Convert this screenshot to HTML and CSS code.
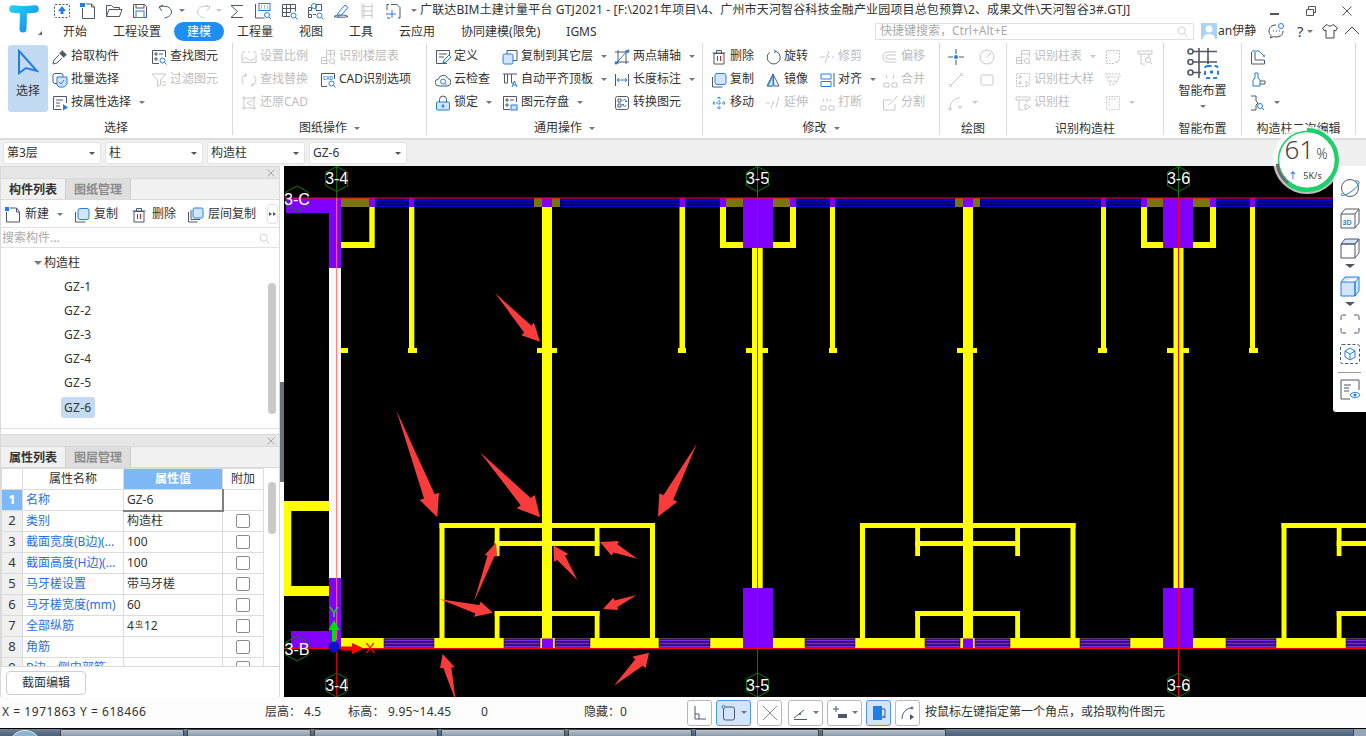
FILE: index.html
```html
<!DOCTYPE html>
<html lang="zh-CN">
<head>
<meta charset="utf-8">
<title>广联达BIM土建计量平台 GTJ2021</title>
<link rel="stylesheet" href="styles.css">
</head>
<body>
<div class="app">
  <header class="head">
    <div class="logo-col">
      <svg class="logo" viewBox="0 0 32 32"><defs><linearGradient id="lg" gradientUnits="userSpaceOnUse" x1="0" y1="0" x2="30" y2="30"><stop offset="0" stop-color="#25dcf6"/><stop offset="1" stop-color="#1483ee"/></linearGradient></defs><path d="M5 7C12 8 20 8 27 7" stroke="url(#lg)" stroke-width="7.5" stroke-linecap="round" fill="none"/><path d="M15 8C16 15 15 20 15 27" stroke="url(#lg)" stroke-width="7" stroke-linecap="round" fill="none"/></svg>
      <i class="logo-mark"></i>
    </div>
    <div class="head-right">
      <div class="title-row">
        <div class="qa">
          <svg class="qi" viewBox="0 0 18 18"><rect x="1.500" y="2.500" width="15" height="13" rx="1" stroke-dasharray="2 1.500"/><path class="bfill" d="M9 4l4 5h-2.500v3h-3V9H5z"/></svg>
          <svg class="qi" viewBox="0 0 18 18"><path d="M3.500 6v10.500h12V5l-3-3H7"/><path d="M12.500 2v3h3"/><rect class="bfill" x="1" y="1" width="5" height="4"/></svg>
          <svg class="qi" viewBox="0 0 18 18"><path d="M1.500 14.500V3.500h5l2 2h6v2"/><path d="M1.500 14.500l2.500-7h13l-2.500 7z"/></svg>
          <svg class="qi" viewBox="0 0 18 18"><path d="M2.500 2.500h11l2 2v11h-13z"/><rect x="5" y="2.500" width="8" height="3.500"/><rect class="bline" x="5" y="9" width="8" height="6.500"/></svg>
          <span class="qi-wrap"><svg class="qi" viewBox="0 0 18 18"><path d="M5 9l-3-4 4-2"/><path d="M2.500 5c6-2 12 0 12 5 0 3-3 5-7 6"/></svg><i class="caret"></i></span>
          <span class="qi-wrap qi-tight"><svg class="qi off" viewBox="0 0 18 18"><path d="M13 9l3-4-4-2"/><path d="M15.500 5c-6-2-12 0-12 5 0 3 3 5 7 6"/></svg><i class="caret pale"></i></span>
          <svg class="qi" viewBox="0 0 18 18"><path d="M15 3.500H3l6.500 6-6.500 6h12"/></svg>
          <svg class="qi" viewBox="0 0 18 18"><path d="M1.500 2v14h9"/><rect class="bline" x="5" y="1.500" width="11" height="7"/><path class="bline" d="M7 4h1M10 4h1M13 4h1M7 6h1M10 6h1M13 6h1"/><circle class="bline" cx="13" cy="13" r="2.500"/><path class="bline" d="M15 15l2 2"/></svg>
          <svg class="qi" viewBox="0 0 18 18"><path d="M10 14.500H2.500v-12h13v7M2.500 6.500h13M2.500 10.500h8M6.500 2.500v12M10.500 2.500v8"/><circle class="bline" cx="13.500" cy="13.500" r="2.500"/><path class="bline" d="M15.500 15.500l2 2"/></svg>
          <svg class="qi" viewBox="0 0 18 18"><path d="M2.500 8.500v-3h3v3zM2.500 15.500v-3h3v3zM10 8.500v-6h5.500v6zM7 12.500h3M2.500 8.500v4"/><circle class="bline" cx="8" cy="4" r="2.500"/><circle class="bline" cx="13.500" cy="13.500" r="2.500"/><path class="bline" d="M15.500 15.500l2 2"/></svg>
          <svg class="qi" viewBox="0 0 18 18"><path d="M2 14.500c2-2 12-2 14 0-1 1-13 1-14 0z"/><path class="bline" d="M6 11l7-8 3 2.500-7 8-3.500 1z"/></svg>
          <svg class="qi off" viewBox="0 0 18 18"><path d="M4 1.500v15M14 1.500v15M4 4.500h10M4 9h10M4 13.500h10M6 1.500v15"/></svg>
          <svg class="qi" viewBox="0 0 18 18"><path d="M7 2.500h6l3 3v10.500h-2M3 8V2.500h2M3 16h3M3 11v2"/><path class="bline" d="M8 8v8M4 12h8"/></svg>
          <i class="caret title-caret"></i>
        </div>
        <div class="title">广联达BIM土建计量平台 GTJ2021 - [F:\2021年项目\4、广州市天河智谷科技金融产业园项目总包预算\2、成果文件\天河智谷3#.GTJ]</div>
        <div class="winbtns">
          <svg class="wi" viewBox="0 0 12 12"><path d="M1 9h9" stroke-width="2"/></svg>
          <svg class="wi" viewBox="0 0 12 12"><path d="M1.500 4.500h7v6h-7zM3.500 4.500v-3h7v6h-2"/></svg>
          <svg class="wi" viewBox="0 0 12 12"><path d="M1.500 1.500l9 9M10.500 1.500l-9 9"/></svg>
        </div>
      </div>
      <div class="tab-row">
        <nav class="tabs">
          <span class="tab">开始</span><span class="tab">工程设置</span><span class="tab active">建模</span><span class="tab">工程量</span><span class="tab">视图</span><span class="tab">工具</span><span class="tab">云应用</span><span class="tab">协同建模(限免)</span><span class="tab">IGMS</span>
        </nav>
        <div class="head-tools">
          <div class="quick"><span>快捷键搜索，Ctrl+Alt+E</span><svg class="ic off mag" viewBox="0 0 16 16"><circle cx="7" cy="7" r="4.500"/><path d="M10.500 10.500l3.500 3.500"/></svg></div>
          <svg class="avatar" viewBox="0 0 16 16"><rect width="16" height="16" fill="#a9d4f7"/><circle cx="8" cy="6" r="3.500" fill="#fff"/><path d="M2 16c0-4 3-5 6-5s6 1 6 5z" fill="#fff"/></svg>
          <span class="uname">an伊静</span>
          <svg class="hi hi-chat" viewBox="0 0 18 18"><path d="M9 3C4.500 3 2 5.500 2 9c0 2 1 3.500 2 4.500L3.500 16l3-1.500c1 .3 1.800.5 2.500.5 4.500 0 7-2.500 7-6"/><path d="M6 9h1M9 9h1M12 9h1"/><circle class="bline" cx="14" cy="4" r="2.500"/></svg>
          <span class="help">?<i class="caret"></i></span>
          <svg class="hi" viewBox="0 0 18 18"><path d="M6 2.500L1.500 6l2 3 1.500-1v8h8V8l1.500 1 2-3L12 2.500c-1 2-5 2-6 0z"/></svg>
          <svg class="hi hi-up" viewBox="0 0 18 18"><path d="M2 12l7-7 7 7"/></svg>
        </div>
      </div>
    </div>
  </header>

  <section class="ribbon">
    <div class="group g1">
      <div class="body">
        <button class="big sel"><svg class="bigarrow" viewBox="0 0 22 26"><path d="M2 2l18 20-11-3-7 5z"/></svg><span>选择</span></button>
        <div class="col w99">
          <div class="tool"><svg class="ic" viewBox="0 0 16 16"><path class="dk" d="M10 1l5 5-2 1-1 2-5-5 2-1z"/><path d="M7 6l-5 5-1 4 4-1 5-5"/></svg>拾取构件</div>
          <div class="tool"><svg class="ic" viewBox="0 0 16 16"><rect x="1" y="1.500" width="10" height="10" rx="2"/><path class="bfill2" d="M5 5h10v7l-3 3H7l-2-2z"/><path class="bline" d="M7 10l2 2 3-4"/></svg>批量选择</div>
          <div class="tool"><svg class="ic" viewBox="0 0 16 16"><path d="M14.500 8V1.500h-13v13h8M4 5h7M4 8h4M4 11h4"/><path class="bsolid" d="M11 9l5 3.500-5 3z"/></svg>按属性选择<i class="caret"></i></div>
        </div>
        <div class="col">
          <div class="tool"><svg class="ic" viewBox="0 0 16 16"><path d="M8 14.500H1.500v-13h13V8M4 4h2v2H4zM8 5h4M4 9h2v2H4z"/><circle class="bline" cx="11.500" cy="11.500" r="2.500"/><path class="bline" d="M13.500 13.500l2 2"/></svg>查找图元</div>
          <div class="tool off"><svg class="ic off" viewBox="0 0 16 16"><path d="M1 2h14L9.500 8v5l-3 1.500V8z"/><path d="M11 10h4M11 13h4"/></svg>过滤图元</div>
        </div>
      </div>
      <div class="glabel">选择</div>
    </div>

    <div class="group g2">
      <div class="body">
        <div class="col w79">
          <div class="tool off"><svg class="ic off" viewBox="0 0 16 16"><path d="M1 4.500v9h14v-9M1 3h3M7 3h2M12 3h3M2 11c2-3 3-3 5-1s4 2 7-1"/></svg>设置比例</div>
          <div class="tool off"><svg class="ic off" viewBox="0 0 16 16"><path d="M5 2.500a6 6 0 0 0-2 10M11 13.500a6 6 0 0 0 2-10M5 1v3H2M11 15v-3h3"/></svg>查找替换</div>
          <div class="tool off"><svg class="ic off" viewBox="0 0 16 16"><path d="M3 1v14M13 1v14M1 3h14M1 13h14M11 5L6 8l5 3"/></svg>还原CAD</div>
        </div>
        <div class="col">
          <div class="tool off"><svg class="ic off" viewBox="0 0 16 16"><path d="M8 14.500H1.500v-6h5v-7h8V8M1.500 11.500h7M6.500 8.500v6M10.500 1.500V8M6.500 5h8"/><circle cx="12" cy="12" r="2.500"/><path d="M14 14l1.500 1.500"/></svg>识别楼层表</div>
          <div class="tool"><svg class="ic" viewBox="0 0 16 16"><path d="M7 14.500H1.500v-13h13V7"/><text class="cad" x="3" y="7.500">CAD</text><circle class="bline" cx="11.500" cy="11.500" r="2.500"/><path class="bline" d="M13.500 13.500l2 2"/></svg>CAD识别选项</div>
        </div>
      </div>
      <div class="glabel">图纸操作<i class="caret cl"></i></div>
    </div>

    <div class="group g3">
      <div class="body">
        <div class="col w67">
          <div class="tool"><svg class="ic" viewBox="0 0 16 16"><path d="M12 14.500H1.500v-13h13v5M4 5h8M4 8h5"/><path class="bline" d="M8 14l1-3 5-5 2 2-5 5z"/></svg>定义</div>
          <div class="tool"><svg class="ic" viewBox="0 0 16 16"><path d="M4 14a3.500 3.500 0 0 1-.5-7A5 5 0 0 1 13 6.500a3.800 3.800 0 0 1-1 7.500z"/><circle class="bline" cx="8" cy="9.500" r="2.500"/><path class="bline" d="M10 11.500l1.500 1.500"/></svg>云检查</div>
          <div class="tool"><svg class="ic" viewBox="0 0 16 16"><path d="M4.500 7V4.500a3.500 3.500 0 0 1 7 0V7"/><rect class="bfill2" x="1.500" y="7" width="13" height="8" rx="1"/><path class="bsolid" d="M8 9l2 2.500H6zM7.500 11h1v2h-1z"/></svg>锁定<i class="caret"></i></div>
        </div>
        <div class="col w112">
          <div class="tool"><svg class="ic" viewBox="0 0 16 16"><path d="M5 5V1.500h10v10h-4"/><rect class="bfill2" x="1" y="5" width="10" height="10" rx="1.500"/></svg>复制到其它层<i class="caret"></i></div>
          <div class="tool"><svg class="ic" viewBox="0 0 16 16"><path d="M1 2h14M2.500 2v9h3V2M9.500 2v9h2"/><path class="bline" d="M10 15l2.500-6 2.500 6M11 13h3"/></svg>自动平齐顶板<i class="caret"></i></div>
          <div class="tool"><svg class="ic" viewBox="0 0 16 16"><path d="M8 14.500H1.500v-13h13V7M4 4h2v2H4zM8 5h4M4 9h2v2H4z"/><rect class="bfill2" x="9" y="10" width="6" height="5"/></svg>图元存盘<i class="caret"></i></div>
        </div>
        <div class="col">
          <div class="tool"><svg class="ic" viewBox="0 0 16 16"><path d="M4 1v14M12 1v14M1 3h14M1 13h14"/><path class="bline" d="M1.500 15L14 1"/><circle class="bsolid" cx="2" cy="14" r="1.500"/><circle class="bsolid" cx="14" cy="2" r="1.500"/></svg>两点辅轴<i class="caret"></i></div>
          <div class="tool"><svg class="ic" viewBox="0 0 16 16"><path d="M1.500 2v12M14.500 2v12"/><path class="bline" d="M3 8h10M5 6L3 8l2 2M11 6l2 2-2 2"/></svg>长度标注<i class="caret"></i></div>
          <div class="tool"><svg class="ic" viewBox="0 0 16 16"><rect x="1.500" y="1.500" width="13" height="13" rx="2"/><path d="M4 4h3v3H4zM4 9h3v3H4z"/><path class="bline" d="M9 6c0-2 3-2 3 0v1M11 6l1 1 1-1M12 10c0 2-3 2-3 0V9M10 10L9 9 8 10"/></svg>转换图元</div>
        </div>
      </div>
      <div class="glabel">通用操作<i class="caret cl"></i></div>
    </div>

    <div class="group g4">
      <div class="body">
        <div class="col w54">
          <div class="tool"><svg class="ic" viewBox="0 0 16 16"><path d="M3 4.500h10V15H3zM1.500 4h13M5.500 4V1.500h5V4"/><path class="rline" d="M6.500 7v5M9.500 7v5"/></svg>删除</div>
          <div class="tool"><svg class="ic" viewBox="0 0 16 16"><path d="M1.500 5v10h10"/><rect class="bfill2" x="4" y="1.500" width="11" height="11" rx="2"/></svg>复制</div>
          <div class="tool"><svg class="ic" viewBox="0 0 16 16"><path class="bline" d="M8 2v12M2 8h12M6.500 3.500L8 1.500l1.500 2M6.500 12.500L8 14.500l1.500-2M3.500 6.500L1.500 8l2 1.500M12.500 6.500l2 1.500-2 1.500" stroke-dasharray="2 1"/></svg>移动</div>
        </div>
        <div class="col w54">
          <div class="tool"><svg class="ic" viewBox="0 0 16 16"><path d="M9.500 2a6.500 6.500 0 1 1-5 1.500"/><path class="bline" d="M9 .5l2 2-2 1.500"/></svg>旋转</div>
          <div class="tool"><svg class="ic" viewBox="0 0 16 16"><path d="M8 2L2 14h5zM8 2l6 12H9z"/><path class="bfill2" d="M8 3L3 14h5z"/></svg>镜像</div>
          <div class="tool off"><svg class="ic off" viewBox="0 0 16 16"><path d="M1 8h4M7 8h2M11 12l3-10M6 13l3-7"/></svg>延伸</div>
        </div>
        <div class="col w63">
          <div class="tool off"><svg class="ic off" viewBox="0 0 16 16"><path d="M1 8h5M9 8h2M13 8h2M10 2L6 14"/></svg>修剪</div>
          <div class="tool"><svg class="ic" viewBox="0 0 16 16"><path class="bline" d="M2 2h10v5H2zM2 9.500h10v5H2z"/><path d="M15 1v14"/></svg>对齐<i class="caret"></i></div>
          <div class="tool off"><svg class="ic off" viewBox="0 0 16 16"><path d="M2 11h5v4H2zM10 11h5v4h-5zM4 4l1 3M12 4l-1 3M8 3v4"/></svg>打断</div>
        </div>
        <div class="col">
          <div class="tool off"><svg class="ic off" viewBox="0 0 16 16"><path d="M14 3H6a5 5 0 0 0 0 10h8M14 6H6a2 2 0 0 0 0 4h8"/></svg>偏移</div>
          <div class="tool off"><svg class="ic off" viewBox="0 0 16 16"><path d="M2 11h5v4H2zM10 11h5v4h-5zM4 3l1 4M12 3l-1 4"/></svg>合并</div>
          <div class="tool off"><svg class="ic off" viewBox="0 0 16 16"><path d="M13 9v6H1.500V5H9M6 10l8-7M15 1l-1 2"/></svg>分割</div>
        </div>
      </div>
      <div class="glabel">修改<i class="caret cl"></i></div>
    </div>

    <div class="group g5">
      <div class="body">
        <div class="col w31">
          <div class="tool"><svg class="ic" viewBox="0 0 16 16"><path d="M8 0v5M8 11v5M0 8h5M11 8h5"/><circle class="bsolid" cx="8" cy="8" r="2"/></svg></div>
          <div class="tool off"><svg class="ic off" viewBox="0 0 16 16"><path d="M3 13L13 3"/><circle cx="2.500" cy="13.500" r="1.200"/><circle cx="13.500" cy="2.500" r="1.200"/></svg></div>
          <div class="tool off"><svg class="ic off" viewBox="0 0 16 16"><path d="M2 14C2 8 6 3 12 3"/><circle cx="2" cy="14" r="1.200"/><circle cx="12" cy="12" r="1.200"/></svg><i class="caret pale"></i></div>
        </div>
        <div class="col">
          <div class="tool off"><svg class="ic off" viewBox="0 0 16 16"><circle cx="8" cy="8" r="7"/><path d="M8 8l4-4"/></svg></div>
          <div class="tool off"><svg class="ic off" viewBox="0 0 16 16"><rect x="2" y="3" width="12" height="10" rx="1.500"/></svg></div>
        </div>
      </div>
      <div class="glabel lower">绘图</div>
    </div>

    <div class="group g6">
      <div class="body">
        <div class="col w90">
          <div class="tool off"><svg class="ic off" viewBox="0 0 16 16"><path d="M8 14.500H1.500v-6h5v-7h8V8M1.500 11.500h7M6.500 8.500v6M6.500 5h8"/><circle cx="12" cy="12" r="2.500"/><path d="M14 14l1.500 1.500"/></svg>识别柱表<i class="caret pale"></i></div>
          <div class="tool off"><svg class="ic off" viewBox="0 0 16 16"><path d="M9 14.500H1.500v-13h13V9" stroke-dasharray="2 1"/><path d="M11 9l4 3-4 3zM4 4h2v2H4zM4 10h2v2H4z"/></svg>识别柱大样</div>
          <div class="tool off"><svg class="ic off" viewBox="0 0 16 16"><path d="M1 2h14v3H1zM4 5v10h4M12 5v3"/><path d="M10 9l5 3-5 3z"/></svg>识别柱</div>
        </div>
        <div class="col w32">
          <div class="tool off"><svg class="ic off" viewBox="0 0 16 16"><path d="M9 14.500H1.500v-13h13V9" stroke-dasharray="2 1"/><path d="M4 4h1M11 4h1M4 11h1M10 12l2 2 3-4"/></svg></div>
          <div class="tool off"><svg class="ic off" viewBox="0 0 16 16"><path d="M1 2h14v3H1zM3 5v4h10V5M5 9v5M11 9v3M7 11l2 2 2-2" stroke-dasharray="2 1"/></svg></div>
          <div class="tool off"><svg class="ic off" viewBox="0 0 16 16"><path d="M1.500 1.500h13v13h-13zM4 4h8M4 4v8" stroke-dasharray="1.500 1"/></svg><i class="caret pale"></i></div>
        </div>
        <div class="col">
          <div class="tool off"><svg class="ic off" viewBox="0 0 16 16"><path d="M1 2h14v3H1zM4 5v10h4M12 5v3"/><circle cx="11" cy="11" r="2.500"/><path d="M13 13l2 2"/></svg></div>
        </div>
      </div>
      <div class="glabel lower">识别构造柱</div>
    </div>

    <div class="group g7">
      <div class="body center">
        <button class="big smart">
          <svg class="smarticon" viewBox="0 0 32 32"><g class="smart-lines"><path d="M6 4.500h24M6 15h24M6 25.500h8M12 1v30M21 1v16"/><circle cx="3.500" cy="4.500" r="2.500"/><circle cx="3.500" cy="15" r="2.500"/><circle cx="3.500" cy="25.500" r="2.500"/></g><rect class="smart-blue" x="18" y="19" width="13" height="12" rx="2.500" stroke-dasharray="4 3"/><circle class="bsolid" cx="24.500" cy="25" r="1.800"/></svg>
          <span>智能布置</span><i class="caret"></i>
        </button>
      </div>
      <div class="glabel lower">智能布置</div>
    </div>

    <div class="group g8">
      <div class="body">
        <div class="col">
          <div class="tool"><svg class="ic" viewBox="0 0 16 16"><path d="M1.500 3v12h13v-4M5 3v8h9"/><path class="bline" d="M2 2h7l5 5"/><circle class="bsolid" cx="14" cy="7" r="1"/></svg></div>
          <div class="tool"><svg class="ic" viewBox="0 0 16 16"><path class="bline" d="M5 1h3v5l2 2v6H3V8l2-2z"/><path d="M10 9h5v3h-5"/></svg></div>
          <div class="tool"><svg class="ic" viewBox="0 0 16 16"><path d="M1 1h5v5l2 2-2 2v5H1"/><circle class="bline" cx="10" cy="11" r="2.500"/><path class="bline" d="M12 13l2 2"/></svg><i class="caret"></i></div>
        </div>
      </div>
      <div class="glabel lower">构造柱二次编辑</div>
    </div>
  </section>

  <div class="combos">
    <div class="combo">第3层<i class="caret"></i></div>
    <div class="combo">柱<i class="caret"></i></div>
    <div class="combo">构造柱<i class="caret"></i></div>
    <div class="combo">GZ-6<i class="caret"></i></div>
  </div>

  <main class="main">
    <aside class="side">
      <section class="panel p1">
        <div class="pbar"><svg class="px" viewBox="0 0 10 10"><path d="M1.500 1.500l7 7M8.500 1.500l-7 7"/></svg></div>
        <div class="ptabs"><span class="ptab on">构件列表</span><span class="ptab">图纸管理</span></div>
        <div class="ptools">
          <svg class="ic" viewBox="0 0 16 16"><path d="M1.500 5v10h13V5l-3-4H5"/><path d="M11.500 1v4h3"/><rect class="bsolid" x="0" y="0" width="4" height="4"/></svg><span class="pt t-new">新建</span><i class="caret"></i>
          <svg class="ic m-copy" viewBox="0 0 16 16"><path d="M1.500 5v10h10"/><rect class="bfill2" x="4" y="1.500" width="11" height="11" rx="2"/></svg><span class="pt">复制</span>
          <svg class="ic m-del" viewBox="0 0 16 16"><path d="M3 4.500h10V15H3zM1.500 4h13M5.500 4V1.500h5V4"/><path class="rline" d="M6.500 7v5M9.500 7v5"/></svg><span class="pt t-del">删除</span>
          <svg class="ic m-lay" viewBox="0 0 16 16"><path d="M0.500 5v10h9M3 3v9.500h9"/><rect class="bfill2" x="5" y="1" width="10" height="10" rx="1.500"/></svg><span class="pt">层间复制</span>
          <span class="more"><i></i><i></i></span>
        </div>
        <div class="psearch"><span>搜索构件...</span><svg class="ic off psm" viewBox="0 0 16 16"><circle cx="7" cy="7" r="4.500"/><path d="M10.500 10.500l3.500 3.500"/></svg></div>
        <div class="tree">
          <div class="node parent"><i class="caret tc"></i>构造柱</div>
          <div class="node">GZ-1</div>
          <div class="node">GZ-2</div>
          <div class="node">GZ-3</div>
          <div class="node">GZ-4</div>
          <div class="node">GZ-5</div>
          <div class="node"><span class="cur">GZ-6</span></div>
          <div class="thumb t1"></div>
        </div>
      </section>
      <section class="panel p2">
        <div class="pbar"><svg class="px" viewBox="0 0 10 10"><path d="M1.500 1.500l7 7M8.500 1.500l-7 7"/></svg></div>
        <div class="ptabs"><span class="ptab on">属性列表</span><span class="ptab">图层管理</span></div>
        <div class="tablewrap">
          <table class="props">
            <colgroup><col class="c0"><col class="c1"><col class="c2"><col class="c3"></colgroup>
            <tr><th class="cn plain"></th><th class="plain">属性名称</th><th class="hl">属性值</th><th class="plain">附加</th></tr>
            <tr><td class="cn hl">1</td><td class="nm">名称</td><td class="edit">GZ-6</td><td></td></tr>
            <tr><td class="cn">2</td><td class="nm">类别</td><td>构造柱</td><td><i class="cb"></i></td></tr>
            <tr><td class="cn">3</td><td class="nm">截面宽度(B边)(...</td><td>100</td><td><i class="cb"></i></td></tr>
            <tr><td class="cn">4</td><td class="nm">截面高度(H边)(...</td><td>100</td><td><i class="cb"></i></td></tr>
            <tr><td class="cn">5</td><td class="nm">马牙槎设置</td><td>带马牙槎</td><td><i class="cb"></i></td></tr>
            <tr><td class="cn">6</td><td class="nm">马牙槎宽度(mm)</td><td>60</td><td><i class="cb"></i></td></tr>
            <tr><td class="cn">7</td><td class="nm">全部纵筋</td><td>4<span class="rebar">虫</span>12</td><td><i class="cb"></i></td></tr>
            <tr><td class="cn">8</td><td class="nm">角筋</td><td></td><td><i class="cb"></i></td></tr>
            <tr><td class="cn">9</td><td class="nm">B边一侧中部筋</td><td></td><td><i class="cb"></i></td></tr>
          </table>
          <div class="thumb t2"></div>
        </div>
        <div class="pfoot"><button class="secbtn">截面编辑</button></div>
      </section>
    </aside>
    <div class="split"><i></i></div>
    <div class="canvas">
      <svg class="cad-view" viewBox="284 166 1082 531">
        <defs>
          <pattern id="bluestripe" patternUnits="userSpaceOnUse" width="4" height="3" y="199"><rect width="4" height="3" fill="#00007c"/><rect y="1" width="4" height="1" fill="#0000c8"/></pattern>
          <pattern id="violetstripe" patternUnits="userSpaceOnUse" width="4" height="3" y="639"><rect width="4" height="3" fill="#3c0d86"/><rect y="1" width="4" height="1" fill="#7a2be0"/></pattern>
          <g id="frame" class="yl">
            <rect x="439.500" y="523" width="215.500" height="5"/><rect x="439.500" y="523" width="5" height="116"/><rect x="650" y="523" width="5" height="116"/>
            <rect x="494.700" y="523" width="4.800" height="33"/><rect x="594.700" y="523" width="4.800" height="33"/><rect x="494.700" y="541" width="104.800" height="5"/>
            <rect x="494.700" y="611" width="104.800" height="5"/><rect x="494.700" y="611" width="4.800" height="28"/><rect x="594.700" y="611" width="4.800" height="28"/>
          </g>
        </defs>
        <rect x="284" y="166" width="1082" height="531" fill="#000"/>
        <g class="yl">
          <rect x="341" y="638" width="1025" height="10"/>
          <path fill-rule="evenodd" d="M284 501h45v95h-45zM291.300 511v75H329v-75z"/>
          <path d="M369.300 207h5.400v41H341v-6h28.300z"/>
          <rect x="341" y="348" width="7" height="5"/>
          <rect x="409" y="207" width="5.300" height="143"/><rect x="408" y="348" width="9" height="5"/>
          <rect x="542" y="207" width="10" height="433"/><rect x="537" y="348" width="20" height="5"/>
          <rect x="679.500" y="207" width="5.500" height="143"/><rect x="678" y="348" width="8" height="5"/>
          <rect x="752" y="248" width="10.700" height="342"/><rect x="746" y="348" width="22" height="5"/>
          <path d="M720 207h6v35h18v6h-24zM790 207h6v41h-24v-6h18z"/>
          <rect x="830" y="207" width="5" height="143"/><rect x="829" y="348" width="8" height="5"/>
          <rect x="963" y="207" width="10" height="433"/><rect x="957" y="348" width="20" height="5"/>
          <rect x="1101" y="207" width="5" height="143"/><rect x="1098" y="348" width="9" height="5"/>
          <rect x="1173.500" y="248" width="10" height="342"/><rect x="1167" y="348" width="22" height="5"/>
          <path d="M1141 207h6v35h18v6h-24zM1210 207h6v41h-24v-6h18z"/>
          <rect x="1250" y="207" width="5" height="143"/><rect x="1249" y="348" width="9" height="5"/>
        </g>
        <use href="#frame"/>
        <use href="#frame" x="420.500"/>
        <use href="#frame" x="842"/>
        <g fill="url(#bluestripe)">
          <rect x="375" y="198" width="34" height="9"/><rect x="414" y="198" width="120" height="9"/><rect x="560" y="198" width="119" height="9"/><rect x="685" y="198" width="35" height="9"/><rect x="796" y="198" width="34" height="9"/><rect x="835" y="198" width="120" height="9"/><rect x="980" y="198" width="121" height="9"/><rect x="1106" y="198" width="35" height="9"/><rect x="1216" y="198" width="34" height="9"/><rect x="1255" y="198" width="111" height="9"/>
        </g>
        <g fill="#7a7410">
          <rect x="341" y="198" width="28" height="9"/><rect x="534" y="198" width="26" height="9"/><rect x="726" y="198" width="64" height="9"/><rect x="955" y="198" width="25" height="9"/><rect x="1147" y="198" width="63" height="9"/>
        </g>
        <g fill="url(#violetstripe)" stroke="#2b0a5e" stroke-width=".6">
          <rect x="384" y="638.500" width="50" height="9"/><rect x="504" y="638.500" width="36" height="9"/><rect x="555" y="638.500" width="35" height="9"/><rect x="659" y="638.500" width="51" height="9"/><rect x="805" y="638.500" width="50" height="9"/><rect x="925" y="638.500" width="35" height="9"/><rect x="975" y="638.500" width="35" height="9"/><rect x="1080" y="638.500" width="50" height="9"/><rect x="1226" y="638.500" width="50" height="9"/><rect x="1346" y="638.500" width="20" height="9"/>
        </g>
        <g fill="#8000ff">
          <path d="M286 198h55v70h-12v-55h-43z"/>
          <path d="M329 578h12v70h-50v-17h38z"/>
          <rect x="369" y="198" width="6" height="9"/><rect x="409" y="198" width="5" height="9"/><rect x="542" y="198" width="10" height="9"/><rect x="679.500" y="198" width="5.500" height="9"/>
          <rect x="720" y="198" width="6" height="9"/><rect x="743" y="198" width="30" height="50"/><rect x="790" y="198" width="6" height="9"/><rect x="830" y="198" width="5" height="9"/><rect x="963" y="198" width="10" height="9"/><rect x="1101" y="198" width="5" height="9"/>
          <rect x="1141" y="198" width="6" height="9"/><rect x="1163" y="198" width="30" height="50"/><rect x="1210" y="198" width="6" height="9"/><rect x="1250" y="198" width="5" height="9"/>
          <rect x="542" y="638.500" width="11" height="9.500"/><rect x="963" y="638.500" width="10" height="9.500"/>
          <rect x="743" y="588" width="30" height="60"/><rect x="1163" y="588" width="30" height="60"/>
        </g>
        <rect x="329" y="268" width="12" height="310" fill="#f7f7f7"/>
        <g class="axis-red">
          <path d="M284 198H1366"/><path d="M284 648.500H1366"/>
          <path d="M757.500 198V697M1178.500 198V697M336.700 648V697"/>
          <path class="pink" d="M336.700 198V640"/>
        </g>
        <g class="axis-green">
          <path d="M336.700 166V198M757.500 166V198M1178.500 166V198"/>
          <path d="M336.700 166.500l11 6v13l-11 6-11-6v-13z"/>
          <path d="M757.500 166.500l11 6v13l-11 6-11-6v-13z"/>
          <path d="M1178.500 166.500l11 6v13l-11 6-11-6v-13z"/>
          <path d="M336.700 673l11 6v12l-11 6-11-6v-12z"/>
          <path d="M757.500 673l11 6v12l-11 6-11-6v-12z"/>
          <path d="M1178.500 673l11 6v12l-11 6-11-6v-12z"/>
          <path d="M297 186l11 6v13l-11 6-11-6v-13z"/>
          <path d="M297 636l11 6v13l-11 6-11-6v-13z"/>
        </g>
        <g class="axis-text">
          <text x="336.700" y="184">3-4</text><text x="757.500" y="184">3-5</text><text x="1178.500" y="184">3-6</text>
          <text x="336.700" y="691">3-4</text><text x="757.500" y="691">3-5</text><text x="1178.500" y="691">3-6</text>
          <text x="297" y="205">3-C</text><text x="297" y="655">3-B</text>
        </g>
        <path d="M341 646.500h11v-3.500l12 5.500-12 5.500v-3.500h-11z" fill="#f00"/>
        <path d="M332 643v-13h-3.500l5.500-10 5.500 10H336v13z" fill="#00e000"/>
        <circle cx="334" cy="647" r="5.500" fill="#0a12c8"/>
        <text class="oy" x="334" y="617">Y</text>
        <text class="ox" x="370" y="653">X</text>
        <g fill="#f83c3c">
          <polygon points="495,293 531.200,325.500 534,322.700 540,341.700 521.300,335.300 524.100,332.500"/>
          <polygon points="396.300,410.300 434.700,494.300 439,492.700 437.300,517.300 419.700,500 424,498.400"/>
          <polygon points="480,452.300 530.700,498 534.700,495 540,517.300 516.700,508.300 520.700,505.300"/>
          <polygon points="696.700,444 673.200,499.800 677.300,501.700 658,516.700 659.300,493.300 663.400,495.200"/>
          <polygon points="474,601.700 487.500,555.400 484.700,555 496,542.700 497.300,556.700 494.500,556.300"/>
          <polygon points="577.300,580 557.200,560 554,561.700 553.300,545.300 568.300,554 565.100,555.700"/>
          <polygon points="637.300,558.700 613.300,552.400 611.700,555.700 600,542 619,541 617.400,544.300"/>
          <polygon points="636.700,595 617.200,607.200 618.300,610 603,609 613.300,597.700 614.400,600.500"/>
          <polygon points="440,599.300 479.200,605 480.700,601.700 493,612.700 474,616.700 475.500,613.400"/>
          <polygon points="455.700,700.700 443.300,668.100 440,668.300 442.700,654 454.700,667.300 451.400,667.500"/>
          <polygon points="614,685.700 635.300,659.300 632.300,656.700 649,652.700 645.700,668.300 642.700,665.700"/>
        </g>
      </svg>
      <aside class="viewbar">
        <svg class="vi" viewBox="0 0 22 22"><ellipse cx="11" cy="11" rx="8.500" ry="8.500"/><path class="bline" d="M3 16C1 19 3 19 7 17.500 12 15.500 19 10 20 6c.5-2-2-2.500-4-2"/></svg>
        <svg class="vi" viewBox="0 0 22 22"><path d="M2 7h14v14H2zM2 7l4-5h14v14l-4 5M16 7l4-5"/><text class="d3" x="3.500" y="17.500">3D</text></svg>
        <svg class="vi" viewBox="0 0 22 22"><path class="bfill3" d="M2 7l4-5h14l-4 5z"/><path d="M2 7h14v14H2zM16 21l4-5V2M16 7l4-5"/></svg>
        <i class="caret vcaret"></i>
        <svg class="vi" viewBox="0 0 22 22"><path class="bfill2" d="M2 7h14v14H2zM2 7l4-5h14v14l-4 5V7l4-5"/></svg>
        <i class="caret vcaret"></i>
        <svg class="vi" viewBox="0 0 22 22"><path d="M7 2H3.500A1.500 1.500 0 0 0 2 3.500V7M15 2h3.500A1.500 1.500 0 0 1 20 3.500V7M2 15v3.500A1.500 1.500 0 0 0 3.500 20H7M20 15v3.500a1.500 1.500 0 0 1-1.500 1.500H15"/></svg>
        <svg class="vi" viewBox="0 0 22 22"><rect x="1.500" y="1.500" width="19" height="19" rx="2" stroke-dasharray="3 2"/><path class="bline" d="M11 5l5 3v6l-5 3-5-3V8zM6 8l5 3 5-3M11 11v6"/></svg>
        <i class="vsep"></i>
        <svg class="vi" viewBox="0 0 22 22"><path d="M11 21H2V2h18v10M5 7h7M5 10h5M5 13h5"/><path class="bline" d="M11 17c2-3.500 8-3.500 10 0-2 3.500-8 3.500-10 0z"/><circle class="bsolid" cx="16" cy="17" r="1.500"/></svg>
      </aside>
    </div>
  </main>

  <footer class="status">
    <span class="s s1">X = 1971863 Y = 618466</span>
    <span class="s s2">层高： 4.5</span>
    <span class="s s3">标高： 9.95~14.45</span>
    <span class="s s4">0</span>
    <span class="s s5">隐藏：0</span>
    <div class="sbtns">
      <span class="sb w25"><svg class="ic" viewBox="0 0 16 16"><path d="M3 1v13h11M3 9h4v5"/></svg></span>
      <span class="sb w36 act"><svg class="ic" viewBox="0 0 16 16"><rect x="2.500" y="2" width="11" height="13" rx="2"/><circle class="bfill2" cx="2.500" cy="2" r="1.500"/></svg><i class="caret"></i></span>
      <span class="sb w25 wide-gap"><svg class="ic off2" viewBox="0 0 16 16"><path d="M1 1l14 14M15 1L1 15"/></svg></span>
      <span class="sb w36 wide-gap"><svg class="ic" viewBox="0 0 16 16"><path d="M1 13l10-8M1 14.500h13"/><circle cx="7" cy="9" r=".8"/></svg><i class="caret"></i></span>
      <span class="sb w36"><svg class="ic" viewBox="0 0 16 16"><path d="M1 4h6M4 1v6"/><rect class="dk" x="6" y="9" width="9" height="4"/></svg><i class="caret"></i></span>
      <span class="sb w25 act"><svg class="ic" viewBox="0 0 16 16"><path class="bsolid" d="M2 1h9v14H2z"/><path d="M11 4h3v8h-3"/><path class="bsolid" d="M12 10l3 3h-3z"/></svg></span>
      <span class="sb w25"><svg class="ic" viewBox="0 0 16 16"><path d="M2 14C2 8 6 3 12 3"/><circle cx="12" cy="3" r="1"/><path class="dk" d="M10 9l4 3-4 3z"/></svg></span>
    </div>
    <span class="hint">按鼠标左键指定第一个角点，或拾取构件图元</span>
  </footer>
  <div class="taskbar">
    <span class="orb"></span>
    <span class="tk"></span><span class="tk"></span><span class="tk"></span><span class="tk"></span><span class="tk"></span><span class="tk"></span><span class="tk"></span>
    <span class="showdesk"></span>
  </div>

  <div class="gauge">
    <svg class="gauge-ring" viewBox="0 0 70 70">
      <circle class="g-halo" cx="35" cy="35" r="34"/>
      <circle class="g-base" cx="35" cy="35" r="28.500"/>
      <circle class="g-arc" cx="35" cy="35" r="30" pathLength="100" stroke-dasharray="61 39" transform="rotate(-90 35 35)"/>
      <circle class="g-gray" cx="35" cy="35" r="30" pathLength="100" stroke-dasharray="12 88" stroke-dashoffset="-61" transform="rotate(-90 35 35)"/>
    </svg>
    <div class="gauge-text"><div class="pct">61<small>%</small></div><div class="spd"><b>↑</b>5K/s</div></div>
  </div>
</div>
</body>
</html>
```

FILE: styles.css
```css
* { box-sizing: border-box; }
html, body { margin: 0; height: 100%; overflow: hidden; }
body { font: 12px/1.2 "Noto Sans", "Noto Sans CJK SC", sans-serif; color: #333; background: #fff; }
.app { position: relative; width: 1366px; height: 736px; display: flex; flex-direction: column; overflow: hidden; }

/* shared icon styles */
svg { display: block; flex: none; }
.ic, .qi, .hi, .wi, .vi { fill: none; stroke: #4f5866; stroke-width: 1; }
.ic { width: 16px; height: 16px; }
.ic.off, .qi.off { stroke: #c8c8c8; }
.ic.off2 { stroke: #8a8a8a; }
.bline { stroke: #1f7fe8; fill: none; }
.bfill { fill: #1f7fe8; stroke: none; }
.bfill2 { fill: #d3e5fb; stroke: #1f7fe8; }
.bfill3 { fill: #d3e5fb; stroke: #4f5866; }
.bsolid { fill: #1f7fe8; stroke: none; }
.rline { stroke: #e01818; }
.dk { fill: #4f5866; stroke: none; }
.caret { display: inline-block; flex: none; width: 0; height: 0; margin-left: 6px; border: 3px solid transparent; border-top: 3px solid #777; border-bottom: 0; }
.caret.pale { border-top-color: #c8c8c8; }
.cad { font: bold 4.5px "Liberation Sans", sans-serif; fill: #1f7fe8; stroke: none; }

/* head */
.head { display: flex; height: 41px; flex: none; background: #fff; }
.logo-col { position: relative; width: 50px; flex: none; }
.logo { width: 32px; height: 32px; margin: 2px 0 0 8px; }
.logo-mark { position: absolute; left: 38px; top: 31px; width: 0; height: 0; border: 2.5px solid #666; border-top-color: transparent; border-left-color: transparent; }
.head-right { flex: 1; min-width: 0; display: flex; flex-direction: column; }
.title-row { height: 21px; display: flex; align-items: center; }
.qa { display: flex; align-items: center; gap: 8px; margin-left: 3px; }
.qi { width: 18px; height: 18px; }
.qi-wrap { display: flex; align-items: center; width: 29px; }
.qi-wrap .caret { margin-left: 4px; }
.qi-tight { margin-right: -3px; }
.title-caret { margin-left: 1px; }
.title { font-size: 12px; letter-spacing: .15px; margin-left: 3px; white-space: nowrap; }
.winbtns { display: flex; gap: 24px; margin-left: auto; padding-right: 13px; }
.wi { width: 12px; height: 12px; stroke: #555; }
.tab-row { height: 20px; display: flex; align-items: center; }
.tabs { display: flex; height: 19px; align-self: flex-end; }
.tab { padding: 0 13px; line-height: 19px; border-radius: 10px; white-space: nowrap; }
.tab.active { background: #1e8ef5; color: #fff; }
.head-tools { margin-left: auto; display: flex; align-items: center; height: 20px; padding-right: 5px; }
.quick { width: 319px; height: 17px; margin-right: 7px; border: 1px solid #e2e2e2; display: flex; align-items: center; justify-content: space-between; padding: 0 4px; color: #aaa; }
.mag { width: 13px; height: 13px; }
.avatar { width: 16px; height: 16px; margin-right: 1px; }
.uname { width: 49px; font-size: 12px; white-space: nowrap; }
.hi { width: 18px; height: 18px; stroke: #444; }
.hi-chat { margin-right: 10px; }
.help { display: flex; align-items: center; width: 26px; padding-left: 2px; font-size: 15px; color: #444; }
.help .caret { margin-left: 3px; }
.hi-up { margin-left: 4px; }

/* ribbon */
.ribbon { display: flex; flex: none; height: 99px; background: #fff; border-bottom: 2px solid #dcdcdc; }
.group { height: 92px; margin-top: 2px; display: flex; flex-direction: column; border-right: 1px solid #d9d9d9; flex: none; }
.g1 { width: 233px; } .g2 { width: 194px; } .g3 { width: 276px; } .g4 { width: 237px; }
.g5 { width: 67px; } .g6 { width: 157px; } .g7 { width: 78px; } .g8 { width: 114px; }
.body { flex: 1; display: flex; padding: 1px 0 0 8px; }
.body.center { justify-content: center; padding-left: 0; }
.col { display: flex; flex-direction: column; flex: none; padding-top: 1px; }
.w31 { width: 31px; } .w32 { width: 32px; } .w54 { width: 54px; } .w63 { width: 63px; } .w67 { width: 67px; }
.w79 { width: 79px; } .w90 { width: 90px; } .w99 { width: 99px; } .w112 { width: 112px; }
.tool { height: 23px; display: flex; align-items: center; gap: 3px; white-space: nowrap; }
.tool .caret { margin-left: 5px; }
.tool.off { color: #bdbdbd; }
.glabel { height: 18px; line-height: 22px; text-align: center; white-space: nowrap; }
.glabel.lower { line-height: 24px; }
.cl { margin-left: 7px; vertical-align: middle; }
.big { border: 0; padding: 0; background: none; font: inherit; color: inherit; display: flex; flex-direction: column; align-items: center; }
.sel { width: 40px; height: 67px; margin: 1px 4px 0 0; background: #c3daf3; border-radius: 3px; padding-top: 4px; }
.bigarrow { width: 22px; height: 26px; margin-bottom: 9px; fill: none; stroke: #1f7fe8; stroke-width: 2; }
.smart { width: 60px; margin-top: 3px; }
.smarticon { width: 32px; height: 32px; margin-bottom: 5px; }
.smart-lines { fill: none; stroke: #4f5866; stroke-width: 1.600; }
.smart-blue { fill: none; stroke: #1f7fe8; stroke-width: 2; }
.smart .caret { margin: 7px 0 0; }

/* combos */
.combos { display: flex; flex: none; gap: 4px; height: 26px; padding: 2px 0 0 3px; background: #f0f0f0; }
.combo { width: 98px; height: 22px; padding-left: 3px; background: #fff; border: 1px solid #e3e3e3; border-radius: 3px; display: flex; align-items: center; justify-content: space-between; padding-right: 5px; }
.combo .caret { border-top-color: #555; }

/* main */
.main { flex: none; height: 531px; display: flex; }
.side { width: 280px; flex: none; display: flex; flex-direction: column; background: #fff; }
.panel { display: flex; flex-direction: column; border-left: 1px solid #d9d9d9; border-right: 1px solid #d9d9d9; }
.p1 { height: 268px; }
.p2 { flex: 1; min-height: 0; }
.pbar { height: 12px; flex: none; background: #e6e6e6; display: flex; justify-content: flex-end; align-items: center; padding-right: 3px; border-top: 1px solid #d9d9d9; }
.px { width: 10px; height: 10px; fill: none; stroke: #a8a8a8; }
.ptabs { height: 22px; flex: none; display: flex; background: #f1f1f1; border-bottom: 1px solid #dadada; border-top: 1px solid #dadada; }
.ptab { width: 65px; text-align: center; line-height: 21px; background: #dedede; color: #8b8b8b; font-weight: 700; border-right: 1px solid #cfcfcf; }
.ptab.on { background: #f1f1f1; color: #333; }
.ptools { height: 28px; flex: none; display: flex; align-items: center; padding: 2px 0 0 4px; border-bottom: 1px solid #e2e2e2; position: relative; }
.pt { margin-left: 4px; white-space: nowrap; }
.ptools .caret { margin-left: 8px; }
.t-new { margin-left: 4px; }
.m-copy { margin-left: 11px; }
.m-del { margin-left: 13px; }
.t-del { margin-left: 5px; }
.m-lay { margin-left: 12px; }
.more { position: absolute; right: 1px; top: 4px; width: 11px; height: 20px; padding: 0; border: 1px solid #e2e2e2; border-radius: 3px; display: flex; align-items: center; justify-content: center; gap: 1px; }
.more i { width: 0; height: 0; border-left: 3px solid #555; border-top: 2.5px solid transparent; border-bottom: 2.5px solid transparent; }
.psearch { height: 20px; flex: none; display: flex; align-items: center; justify-content: space-between; padding: 1px 8px 0 1px; color: #aaa; border-bottom: 1px solid #e2e2e2; }
.psm { width: 13px; height: 13px; }
.tree { position: relative; flex: none; height: 181px; padding-top: 3px; border-bottom: 1px solid #e2e2e2; }
.node { height: 24px; line-height: 24px; padding-left: 63px; display: flex; align-items: center; letter-spacing: .3px; }
.node.parent { padding-left: 33px; letter-spacing: 0; }
.tc { margin: 0 2px 0 0; border-width: 4px; border-top-width: 4px; border-top-color: #777; }
.cur { display: block; margin-left: -3px; padding: 0 3px; line-height: 21px; background: #c3daf3; border-radius: 3px; }
.thumb { position: absolute; width: 8px; background: #c9c9c9; border-radius: 4px; }
.t1 { left: 267px; top: 35px; height: 131px; }
.t2 { left: 267px; top: 14px; height: 52px; }

/* property table */
.tablewrap { position: relative; height: 199px; flex: none; overflow: hidden; border-bottom: 1px solid #d9d9d9; }
.props { table-layout: fixed; border-collapse: collapse; width: 262px; }
.c0 { width: 21px; } .c1 { width: 101px; } .c2 { width: 99px; } .c3 { width: 41px; }
.props th, .props td { height: 21px; padding: 0 0 0 3px; border: 1px solid #dcdcdc; font-weight: 400; text-align: left; white-space: nowrap; overflow: hidden; }
.props th { text-align: center; padding: 0; }
.props .cn { background: #f0f0f0; text-align: center; padding: 0; font-size: 13px; }
.props .plain { background: #fff; }
.props .hl { background: #7eb9f7; color: #fff; font-weight: 700; text-align: center; }
.props .nm { color: #2a6fe8; }
.props .edit { border: 2px solid #808080; border-top: 1px solid #808080; border-left: 1px solid #808080; }
.rebar { font-size: 8px; vertical-align: 3px; margin: 0 1px; }
.cb { display: block; width: 14px; height: 14px; margin: 0 auto 0 10px; border: 1px solid #8a8a8a; border-radius: 2px; background: #fff; }
.pfoot { flex: 1; padding: 4px 0 0 5px; }
.secbtn { width: 80px; height: 24px; padding: 0; font: inherit; color: inherit; background: #fff; border: 1px solid #cfcfcf; border-radius: 4px; }
.split { width: 4px; flex: none; background: #fff; position: relative; }
.split i { position: absolute; left: 0; top: 216px; width: 4px; height: 100px; background: #69737f; }
.canvas { position: relative; flex: 1; min-width: 0; background: #000; overflow: hidden; }
.cad-view { width: 1082px; height: 531px; }
.yl { fill: #ff0; }
.axis-red { stroke: #f00; stroke-width: 1; fill: none; }
.axis-red .pink { stroke: #ff6a6a; }
.axis-green { stroke: #0a7d0a; stroke-width: 1; fill: none; }
.axis-text text { font: 16px "Liberation Sans", sans-serif; fill: #fff; text-anchor: middle; }
.oy { font: 15px "Liberation Sans", sans-serif; fill: #00e000; text-anchor: middle; }
.ox { font: 15px "Liberation Sans", sans-serif; fill: #f00; text-anchor: middle; }

/* view toolbar */
.viewbar { position: absolute; right: 0; top: 0; width: 33px; height: 246px; background: #fff; border-bottom-left-radius: 3px; display: flex; flex-direction: column; align-items: center; padding-top: 11px; }
.vi { width: 22px; height: 22px; margin-bottom: 8px; }
.d3 { font: bold 7px "Liberation Sans", sans-serif; fill: #1f7fe8; stroke: none; }
.vcaret { margin: -3px 0 7px; border-width: 5px; border-top-width: 4px; border-top-color: #555; }
.vsep { display: block; width: 23px; height: 1px; background: #9a9a9a; margin: -1px 0 5px; }

/* status */
.status { height: 32px; flex: none; background: #fdfdfd; display: flex; align-items: center; padding-left: 2px; border-bottom: 1px solid #000; white-space: nowrap; }
.s1 { width: 263px; letter-spacing: .55px; } .s2 { width: 83px; } .s3 { width: 133px; letter-spacing: .2px; } .s4 { width: 103px; } .s5 { width: 103px; }
.sbtns { display: flex; gap: 4px; margin-right: 5px; }
.sb { height: 26px; display: flex; align-items: center; justify-content: center; background: #fff; border: 1px solid #b8b8b8; border-radius: 3px; }
.sb .caret { margin-left: 4px; }
.wide-gap { margin-left: 2px; }
.w25 { width: 25px; } .w36 { width: 35px; }
.sb.act { background: #d3e5fb; border-color: #4a9bf0; }
.hint { color: #333; }

/* taskbar */
.taskbar { height: 7px; flex: none; display: flex; overflow: hidden; position: relative; background: linear-gradient(#6f8398, #4a6078); gap: 3px; padding-left: 60px; }
.orb { position: absolute; left: 8px; top: 1px; width: 34px; height: 34px; border-radius: 50%; background: #8fb2cf; border: 1px solid #dbe7f1; }
.tk { width: 124px; height: 100%; background: linear-gradient(#b9c4cf, #8b98a6); border: 1px solid #444; border-bottom: 0; border-radius: 2px 2px 0 0; }
.showdesk { position: absolute; right: 0; top: 0; width: 13px; height: 100%; background: #95a5b5; border-left: 1px solid #3c4a58; }

/* gauge */
.gauge { position: absolute; left: 1272px; top: 125px; width: 70px; height: 70px; }
.gauge-ring { width: 70px; height: 70px; }
.g-halo { fill: #fff; fill-opacity: .75; }
.g-base { fill: #fff; stroke: #1fcf6c; stroke-width: 1.500; }
.g-arc { fill: none; stroke: #1fcf6c; stroke-width: 4; }
.g-gray { fill: none; stroke: #6a6a6a; stroke-width: 3; }
.gauge-text { position: absolute; left: 0; top: 10px; width: 70px; text-align: center; color: #444; }
.pct { font-size: 26px; line-height: 28px; font-weight: 300; margin-left: -2px; }
.pct small { font-size: 14px; margin-left: 2px; }
.spd { font-size: 9px; line-height: 14px; margin: 1px 0 0 -4px; }
.spd b { color: #1f7fe8; font-weight: 700; margin-right: 6px; }
```
